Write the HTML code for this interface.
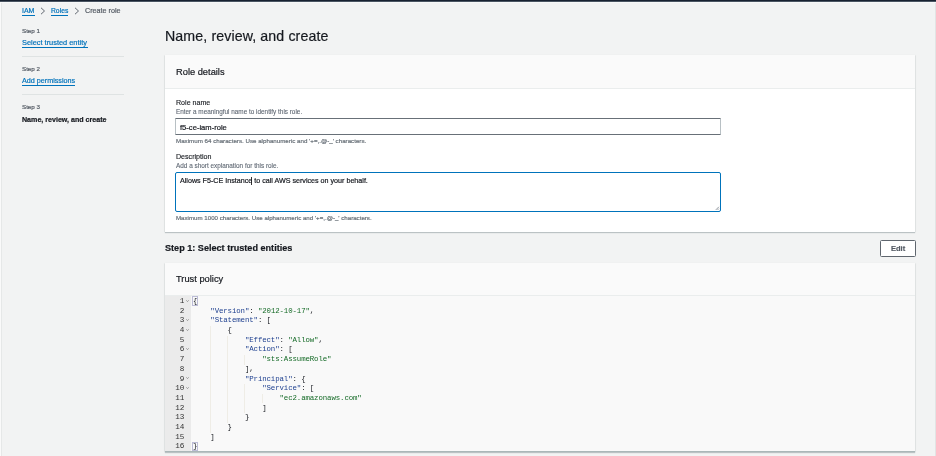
<!DOCTYPE html>
<html><head><meta charset="utf-8">
<style>
*{margin:0;padding:0;box-sizing:border-box}
html,body{width:936px;height:456px;overflow:hidden;background:#f2f3f3;font-family:"Liberation Sans",sans-serif;color:#16191f}
.a{position:absolute;white-space:nowrap;line-height:1;will-change:transform;-webkit-text-stroke:0.2px}
#topbar{position:absolute;left:0;top:0;width:936px;height:2px;background:linear-gradient(#172130 0,#172130 1px,#4a5562 1px)}
#topline{position:absolute;left:0;top:2px;width:936px;height:1px;background:#f7f8f8}
#lcol{position:absolute;left:0;top:2px;width:1px;height:454px;background:#fafafa}
#lcol2{position:absolute;left:1px;top:3px;width:1px;height:453px;background:#e6e8e8}
#rcol{position:absolute;left:935px;top:3px;width:1px;height:453px;background:#e2e4e4}
.link{color:#0073bb}
.ul{position:absolute;height:1px;background:#0073bb}
.hr{position:absolute;height:1px;background:#dfe3e3}
.step{color:#545b64}
.card{position:absolute;background:#fff;box-shadow:0 1px 1px 0 rgba(0,28,36,.22),1px 0 1px 0 rgba(0,28,36,.04),-1px 0 1px 0 rgba(0,28,36,.04)}
.chead{position:absolute;left:0;top:0;right:0;background:#fafafa;border-bottom:1px solid #eaeded}
.input{position:absolute;background:#fff;border:1px solid #b8c0c4;border-top-color:#687078;border-bottom-color:#687078;border-radius:1px}
.hint{color:#687078}
.code{will-change:transform;font-family:"Liberation Mono",monospace;font-size:7.4px;letter-spacing:-0.11px;line-height:9.68px;white-space:pre;position:absolute}
.fold{position:absolute;width:3px;height:2px}
.guide{position:absolute;width:0.8px;background:#efede6}
.bm{position:absolute;border:0.7px solid #bcbcd6;background:transparent}
.k{color:#1d3f8f}
.s{color:#146a26}
</style></head><body>
<div id="topbar"></div><div id="topline"></div><div id="lcol"></div><div id="lcol2"></div><div id="rcol"></div>

<!-- breadcrumbs -->
<div id="t_iam" class="a link" style="left:22px;top:6px;font-size:7px;line-height:9px">IAM</div>
<div class="ul" style="left:22px;top:15px;width:13px"></div>
<svg class="a" style="left:40px;top:7px" width="6" height="8" viewBox="0 0 6 8"><path d="M1 0.8 L4.5 4 L1 7.2" fill="none" stroke="#545b64" stroke-width="0.9"/></svg>
<div id="t_roles" class="a link" style="left:51px;top:6px;font-size:6.75px;line-height:9px">Roles</div>
<div class="ul" style="left:51px;top:15px;width:17px"></div>
<svg class="a" style="left:74px;top:7px" width="6" height="8" viewBox="0 0 6 8"><path d="M1 0.8 L4.5 4 L1 7.2" fill="none" stroke="#545b64" stroke-width="0.9"/></svg>
<div id="t_create" class="a" style="left:85px;top:6px;font-size:7.2px;line-height:9px;color:#545b64">Create role</div>

<!-- left nav -->
<div id="t_step1" class="a step" style="left:22px;top:27.5px;font-size:6.2px">Step 1</div>
<div id="t_sel" class="a link" style="left:22px;top:38px;font-size:7.4px;line-height:9px">Select trusted entity</div>
<div class="ul" style="left:22px;top:47px;width:66px"></div>
<div class="hr" style="left:22px;top:56px;width:102px"></div>
<div id="t_step2" class="a step" style="left:22px;top:65.5px;font-size:6.2px">Step 2</div>
<div id="t_add" class="a link" style="left:22px;top:76px;font-size:7.2px;line-height:9px">Add permissions</div>
<div class="ul" style="left:22px;top:85px;width:53px"></div>
<div class="hr" style="left:22px;top:94px;width:102px"></div>
<div id="t_step3" class="a step" style="left:22px;top:103.5px;font-size:6.2px">Step 3</div>
<div id="t_navname" class="a" style="left:22px;top:116.5px;font-size:7.1px;font-weight:bold">Name, review, and create</div>

<!-- heading -->
<div id="t_h1" class="a" style="left:165px;top:29px;font-size:14.2px;letter-spacing:0.11px">Name, review, and create</div>

<!-- card 1 -->
<div class="card" style="left:165px;top:55px;width:750px;height:177px">
  <div class="chead" style="height:34px"></div>
  <div id="t_roledet" class="a" style="left:11px;top:12.5px;font-size:9.3px">Role details</div>
  <div id="t_rname" class="a" style="left:11px;top:44.5px;font-size:7.1px;-webkit-text-stroke:0.12px #16191f">Role name</div>
  <div id="t_rhint" class="a hint" style="left:11px;top:54px;font-size:6.38px;-webkit-text-stroke:0.1px;color:#5f6873">Enter a meaningful name to identify this role.</div>
  <div class="input" style="left:10px;top:63px;width:546px;height:17px"></div>
  <div id="t_rval" class="a" style="left:15px;top:68.5px;font-size:7.6px">f5-ce-iam-role</div>
  <div id="t_rmax" class="a hint" style="left:11px;top:83px;font-size:6.2px">Maximum 64 characters. Use alphanumeric and '+=,.@-_' characters.</div>
  <div id="t_desc" class="a" style="left:11px;top:98.5px;font-size:7.1px;-webkit-text-stroke:0.12px #16191f">Description</div>
  <div id="t_dhint" class="a hint" style="left:11px;top:108px;font-size:6.4px;-webkit-text-stroke:0.1px;color:#5f6873">Add a short explanation for this role.</div>
  <div class="input" style="left:10px;top:117px;width:546px;height:40px;border:1px solid #0073bb;border-radius:2px"></div>
  <svg class="a" style="left:550px;top:151px" width="5" height="5" viewBox="0 0 5 5"><path d="M0.8 3.9 L3.9 0.8 M2.6 3.9 L3.9 2.6" stroke="#687078" stroke-width="0.7" fill="none"/></svg>
  <div class="a" style="left:86px;top:121.5px;width:0.6px;height:8px;background:#333"></div>
  <div id="t_dval" class="a" style="left:15px;top:122.5px;font-size:7.15px">Allows F5-CE Instance to call AWS services on your behalf.</div>
  <div id="t_dmax" class="a hint" style="left:11px;top:160px;font-size:6.15px">Maximum 1000 characters. Use alphanumeric and '+=,.@-_' characters.</div>
</div>

<div id="t_step" class="a" style="left:165px;top:244px;font-size:9.1px;font-weight:bold">Step 1: Select trusted entities</div>
<div class="a" style="left:880px;top:240px;width:36px;height:17px;border:1px solid #5f666e;border-radius:1.5px;background:#fff"></div>
<div id="t_edit" class="a" style="left:891px;top:244.5px;font-size:7.5px;font-weight:bold;color:#545b64">Edit</div>

<!-- card 2 -->
<div class="card" style="left:165px;top:263px;width:750px;height:189px">
  <div class="chead" style="height:33px"></div>
  <div id="t_trust" class="a" style="left:11px;top:12px;font-size:9.3px">Trust policy</div>
  <div style="position:absolute;left:0;top:33px;width:750px;height:156px;background:#f9f9f9;border-bottom:1px solid #aab7b8"></div>
  <div style="position:absolute;left:0;top:33px;width:26px;height:155px;background:#ebebeb"></div>
</div>
<svg class="fold" style="left:186.3px;top:300.00px" width="3" height="2" viewBox="0 0 3 2"><path d="M0.3 0.3 L1.5 1.6 L2.7 0.3" stroke="#666" stroke-width="0.6" fill="none"/></svg>
<svg class="fold" style="left:186.3px;top:319.36px" width="3" height="2" viewBox="0 0 3 2"><path d="M0.3 0.3 L1.5 1.6 L2.7 0.3" stroke="#666" stroke-width="0.6" fill="none"/></svg>
<svg class="fold" style="left:186.3px;top:329.04px" width="3" height="2" viewBox="0 0 3 2"><path d="M0.3 0.3 L1.5 1.6 L2.7 0.3" stroke="#666" stroke-width="0.6" fill="none"/></svg>
<svg class="fold" style="left:186.3px;top:348.40px" width="3" height="2" viewBox="0 0 3 2"><path d="M0.3 0.3 L1.5 1.6 L2.7 0.3" stroke="#666" stroke-width="0.6" fill="none"/></svg>
<svg class="fold" style="left:186.3px;top:377.44px" width="3" height="2" viewBox="0 0 3 2"><path d="M0.3 0.3 L1.5 1.6 L2.7 0.3" stroke="#666" stroke-width="0.6" fill="none"/></svg>
<svg class="fold" style="left:186.3px;top:387.12px" width="3" height="2" viewBox="0 0 3 2"><path d="M0.3 0.3 L1.5 1.6 L2.7 0.3" stroke="#666" stroke-width="0.6" fill="none"/></svg>
<div class="guide" style="left:209.82px;top:326.04px;height:106.48px"></div>
<div class="guide" style="left:227.14px;top:335.72px;height:87.12px"></div>
<div class="guide" style="left:244.46px;top:355.08px;height:9.68px"></div>
<div class="guide" style="left:244.46px;top:384.12px;height:29.04px"></div>
<div class="guide" style="left:261.78px;top:393.80px;height:9.68px"></div>
<div class="bm" style="left:192.4px;top:296.30px;width:5.3px;height:9.8px"></div>
<div class="bm" style="left:192.4px;top:441.50px;width:5.3px;height:9.8px"></div>
<div id="t_code" class="code" style="left:192.5px;top:297px">{
    <span class="k">&quot;Version&quot;</span>: <span class="s">&quot;2012-10-17&quot;</span>,
    <span class="k">&quot;Statement&quot;</span>: [
        {
            <span class="k">&quot;Effect&quot;</span>: <span class="s">&quot;Allow&quot;</span>,
            <span class="k">&quot;Action&quot;</span>: [
                <span class="s">&quot;sts:AssumeRole&quot;</span>
            ],
            <span class="k">&quot;Principal&quot;</span>: {
                <span class="k">&quot;Service&quot;</span>: [
                    <span class="s">&quot;ec2.amazonaws.com&quot;</span>
                ]
            }
        }
    ]
}</div>
<div id="t_nums" class="code" style="left:165px;top:297px;width:19.2px;text-align:right;color:#333;font-size:7.7px;letter-spacing:-0.2px">1
2
3
4
5
6
7
8
9
10
11
12
13
14
15
16</div>
</body></html>
